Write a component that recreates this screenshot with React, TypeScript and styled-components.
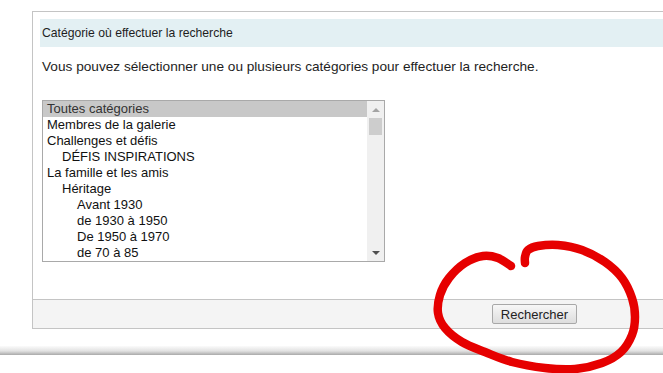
import React from 'react';
import styled, { createGlobalStyle } from 'styled-components';

// Page-wide reset: no body margin, white page, nothing scrolls
const GlobalStyle = createGlobalStyle`
  html, body {
    margin: 0;
    padding: 0;
    background: #ffffff;
    overflow: hidden;
  }
  body {
    font-family: "Liberation Sans", Arial, sans-serif;
    color: #222222;
  }
`;

type Category = {
  label: string;
  level: number;
  selected?: boolean;
};

const categories: Category[] = [
  { label: 'Toutes catégories', level: 0, selected: true },
  { label: 'Membres de la galerie', level: 0 },
  { label: 'Challenges et défis', level: 0 },
  { label: 'DÉFIS INSPIRATIONS', level: 1 },
  { label: 'La famille et les amis', level: 0 },
  { label: 'Héritage', level: 1 },
  { label: 'Avant 1930', level: 2 },
  { label: 'de 1930 à 1950', level: 2 },
  { label: 'De 1950 à 1970', level: 2 },
  { label: 'de 70 à 85', level: 2 },
];

// Points of the hand-drawn red loop around the button
const loopPoints: [number, number][] = [
  [511, 266], [498, 258], [483, 256], [465, 263], [449, 278], [440, 295],
  [438, 313], [445, 328], [462, 342], [485, 352], [512, 362], [545, 368],
  [575, 369], [602, 363], [621, 352], [632, 335], [635, 317], [632, 298],
  [622, 278], [605, 262], [582, 250], [558, 245], [538, 246], [528, 250],
  [525, 257], [525, 263],
];

// Catmull-Rom spline through the points, written as cubic curves
const smoothPath = (pts: [number, number][]) => {
  let d = `M${pts[0][0]} ${pts[0][1]}`;
  for (let i = 0; i < pts.length - 1; i++) {
    const p0 = pts[i - 1] || pts[i];
    const p1 = pts[i];
    const p2 = pts[i + 1];
    const p3 = pts[i + 2] || p2;
    const c1x = p1[0] + (p2[0] - p0[0]) / 6;
    const c1y = p1[1] + (p2[1] - p0[1]) / 6;
    const c2x = p2[0] - (p3[0] - p1[0]) / 6;
    const c2y = p2[1] - (p3[1] - p1[1]) / 6;
    d += ` C${c1x.toFixed(1)} ${c1y.toFixed(1)} ${c2x.toFixed(1)} ${c2y.toFixed(1)} ${p2[0]} ${p2[1]}`;
  }
  return d;
};

const Page = styled.div`
  position: relative;
  width: 663px;
  height: 373px;
  padding-top: 11px;
  box-sizing: border-box;
`;

const Panel = styled.div`
  margin-left: 32px;
  border: 1px solid #c4c4c4;
  border-right: none;
  background: #ffffff;
`;

const PanelBody = styled.div`
  padding: 7px 0 37px 7px;
`;

const Caption = styled.div`
  height: 28px;
  display: flex;
  align-items: center;
  padding-left: 2px;
  background: #e3f0f3;
  font-size: 12.2px;
  color: #1e1e1e;
`;

const Intro = styled.p`
  margin: 12px 0 0 2px;
  font-size: 13.65px;
  line-height: 16px;
  white-space: nowrap;
  color: #1e1e1e;
`;

const ListBox = styled.div`
  margin: 25px 0 0 2px;
  width: 341px;
  height: 160px;
  display: flex;
  border: 1px solid #a9a9a9;
  background: #ffffff;
`;

const Options = styled.div`
  flex: 1;
  display: flex;
  flex-direction: column;
`;

const Option = styled.div<{ $level: number; $selected?: boolean }>`
  height: 16px;
  line-height: 16px;
  font-size: 13px;
  white-space: nowrap;
  padding-left: ${(p) => 4 + p.$level * 15}px;
  background: ${(p) => (p.$selected ? '#c8c8c8' : 'transparent')};
  color: ${(p) => (p.$selected ? '#333333' : '#111111')};
`;

const ScrollBar = styled.div`
  width: 17px;
  display: flex;
  flex-direction: column;
  align-items: center;
  background: #f0f0f0;
`;

const Arrow = styled.div<{ $down?: boolean }>`
  height: 17px;
  display: flex;
  align-items: center;
  justify-content: center;
  &::before {
    content: '';
    width: 0;
    height: 0;
    border-left: 4px solid transparent;
    border-right: 4px solid transparent;
    ${(p) =>
      p.$down
        ? 'border-top: 4px solid #505050;'
        : 'border-bottom: 4px solid #a3a3a3;'}
  }
`;

const Track = styled.div`
  flex: 1;
  width: 100%;
  display: flex;
  justify-content: center;
`;

const Thumb = styled.div`
  width: 13px;
  height: 17px;
  background: #cdcdcd;
`;

const Footer = styled.div`
  height: 28px;
  display: flex;
  align-items: center;
  justify-content: flex-end;
  padding-right: 86px;
  border-top: 1px solid #c4c4c4;
  background: #f4f4f4;
`;

const Button = styled.button`
  height: 20px;
  padding: 0 8px;
  border: 1px solid #a8a8a8;
  border-radius: 2px;
  background: linear-gradient(#f7f7f7, #dddddd);
  font-family: "Liberation Sans", Arial, sans-serif;
  font-size: 13px;
  color: #222222;
  cursor: pointer;
`;

const Shade = styled.div`
  margin-top: 17px;
  height: 9px;
  background: linear-gradient(#fbfbfb, #e2e2e2 55%, #a9a9a9);
`;

const Annotation = styled.svg`
  position: absolute;
  left: 0;
  top: 0;
  pointer-events: none;
`;

const App: React.FC = () => (
  <Page>
    <GlobalStyle />
    <Panel>
      <PanelBody>
        <Caption>Catégorie où effectuer la recherche</Caption>
        <Intro>
          Vous pouvez sélectionner une ou plusieurs catégories pour effectuer la recherche.
        </Intro>
        <ListBox>
          <Options>
            {categories.map((c) => (
              <Option key={c.label} $level={c.level} $selected={c.selected}>
                {c.label}
              </Option>
            ))}
          </Options>
          <ScrollBar>
            <Arrow />
            <Track>
              <Thumb />
            </Track>
            <Arrow $down />
          </ScrollBar>
        </ListBox>
      </PanelBody>
      <Footer>
        <Button>Rechercher</Button>
      </Footer>
    </Panel>
    <Shade />
    <Annotation width="663" height="373" viewBox="0 0 663 373">
      <path
        d={smoothPath(loopPoints)}
        fill="none"
        stroke="#e60000"
        strokeWidth="8.5"
        strokeLinecap="round"
        strokeLinejoin="round"
      />
    </Annotation>
  </Page>
);

export default App;
